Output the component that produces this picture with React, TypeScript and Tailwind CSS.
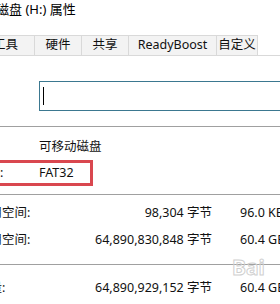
import React from "react";

const font = { fontFamily: '"Noto Sans", "Noto Sans CJK SC", sans-serif' };

function SpaceRow({ label, bytes, size }: { label: string; bytes: string; size: string }) {
  return (
    <div className="flex h-[20px] items-center ml-[-23px] whitespace-nowrap">
      <div className="w-[83px] shrink-0">{label}</div>
      <div className="w-[152px] shrink-0 text-right">{bytes}</div>
      <div className="ml-[28px] shrink-0">{size}</div>
    </div>
  );
}

export default function App() {
  return (
    <div
      className="relative w-[280px] h-[304px] overflow-hidden bg-white text-[12.5px] text-[#111]"
      style={font}
    >
      {/* title */}
      <div className="h-[20px] flex items-center whitespace-nowrap ml-[-4px] text-[13px] text-black">
        磁盘 (H:) 属性
      </div>
      {/* tabs */}
      <div className="mt-[15px] h-[21px] flex border-b border-[#d9d9d9] whitespace-nowrap">
        <div className="ml-[-12px] w-[47px] shrink-0 bg-[#f3f3f3] border-t border-r border-[#d9d9d9] flex items-center justify-end pr-[16px]">
          工具
        </div>
        <div className="w-[47px] shrink-0 bg-[#f3f3f3] border-t border-r border-[#d9d9d9] flex items-center justify-center">
          硬件
        </div>
        <div className="w-[47px] shrink-0 bg-[#f3f3f3] border-t border-r border-[#d9d9d9] flex items-center justify-center">
          共享
        </div>
        <div className="w-[88px] shrink-0 bg-[#f3f3f3] border-t border-r border-[#d9d9d9] flex items-center justify-center">
          ReadyBoost
        </div>
        <div className="w-[41px] shrink-0 bg-[#f3f3f3] border-t border-r border-[#d9d9d9] flex items-center justify-center">
          自定义
        </div>
      </div>
      {/* name textbox */}
      <div className="mt-[25px] ml-[39px] w-[260px] h-[30px] border border-[#3b7890] bg-white flex items-center">
        <div className="ml-[3px] w-px h-[18px] bg-black" />
      </div>
      <div className="mt-[15px] h-px bg-[#a0a0a0]" />
      {/* type */}
      <div className="mt-[10px] h-[20px] flex items-center ml-[-50px] whitespace-nowrap">
        <div className="w-[89px] shrink-0 text-[#111]">类型:</div>
        <div>可移动磁盘</div>
      </div>
      {/* file system */}
      <div className="mt-[3px] ml-[-60px] w-[153px] h-[26px] border-[3px] border-[#d9474f] flex items-center whitespace-nowrap">
        <div className="ml-[7px] w-[89px] shrink-0">文件系统:</div>
        <div>FAT32</div>
      </div>
      <div className="mt-[8px] h-px bg-[#a0a0a0]" />
      <div className="mt-[8px]">
        <SpaceRow label="已用空间:" bytes="98,304 字节" size="96.0 KB" />
      </div>
      <div className="mt-[7px]">
        <SpaceRow label="可用空间:" bytes="64,890,830,848 字节" size="60.4 GB" />
      </div>
      <div className="mt-[14px] h-px bg-[#a0a0a0]" />
      <div className="mt-[13px]">
        <SpaceRow label="容量:" bytes="64,890,929,152 字节" size="60.4 GB" />
      </div>
      {/* watermark */}
      <div className="absolute left-[232px] top-[257px] text-[21px] font-bold text-transparent [-webkit-text-stroke:1px_#d0d0d0] whitespace-nowrap leading-none">
        Bai
      </div>
    </div>
  );
}
